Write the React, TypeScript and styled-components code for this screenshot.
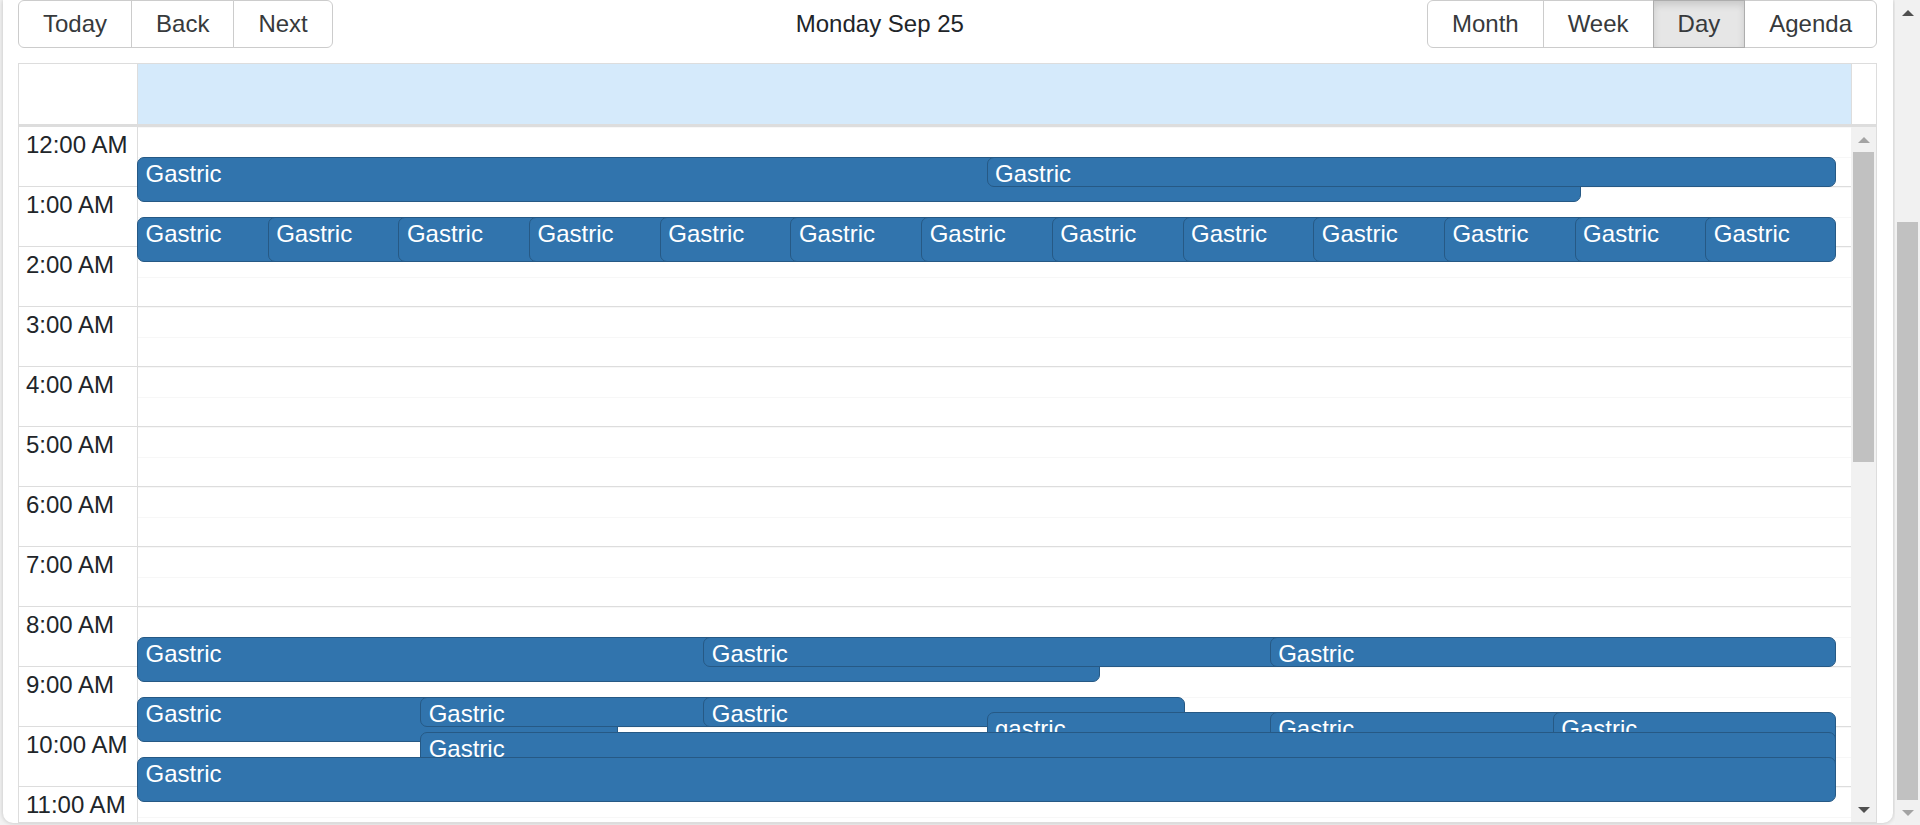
import React from "react";
import styled, { createGlobalStyle, css } from "styled-components";

const GlobalStyle = createGlobalStyle`
  *, *::before, *::after { box-sizing: border-box; }
  html, body { margin: 0; padding: 0; height: 100%; overflow: hidden; background: #f3f3f3; }
  body { font-family: "Liberation Sans", Arial, sans-serif; color: #212529; }
  #root { height: 100%; }
`;

const HOUR_PX = 60;
const DAY_PX = HOUR_PX * 24;
const VISIBLE_PX = 694;
const ARROW_PX = 25;

const Page = styled.div`
  display: flex;
  width: 1920px;
  height: 825px;
  overflow: hidden;
  background: #f3f3f3;
`;

const PanelArea = styled.div`
  flex: 1;
  min-width: 0;
  display: flex;
  padding: 0 2px 0 3px;
`;

const Panel = styled.div`
  flex: 1;
  min-width: 0;
  height: 823px;
  display: flex;
  flex-direction: column;
  background: #fff;
  border-radius: 0 0 10px 10px;
  box-shadow: 0 0 5px rgba(0, 0, 0, 0.22);
  padding: 0 16px 0 15px;
`;

const Toolbar = styled.div`
  display: flex;
  align-items: center;
  height: 48px;
  margin-bottom: 15px;
  font-size: 24px;
  flex: none;
`;

const BtnGroup = styled.div`
  display: inline-flex;
  flex: none;
`;

const ToolButton = styled.button<{ $active?: boolean }>`
  font: inherit;
  font-size: 24px;
  line-height: 28px;
  color: #373a3c;
  background: #fff;
  border: 1px solid #ccc;
  padding: 9px 24px;
  margin: 0;
  border-radius: 0;
  cursor: pointer;
  white-space: nowrap;
  & + & { margin-left: -1px; }
  &:first-child { border-radius: 6px 0 0 6px; }
  &:last-child { border-radius: 0 6px 6px 0; }
  ${(p) =>
    p.$active &&
    css`
      background: #e6e6e6;
      border-color: #adadad;
      box-shadow: inset 0 4px 7px rgba(0, 0, 0, 0.125);
      position: relative;
      z-index: 1;
    `}
`;

const Title = styled.span`
  flex: 1;
  text-align: center;
  padding: 0 15px;
  color: #212529;
`;

const TimeView = styled.div`
  flex: 1;
  min-height: 0;
  display: flex;
  flex-direction: column;
  border: 1px solid #ddd;
`;

const TimeHeader = styled.div`
  display: flex;
  height: 60px;
  flex: none;
  margin-right: 24px;
  border-right: 1px solid #ddd;
`;

const GutterHeader = styled.div`
  width: 118px;
  flex: none;
  background: #fff;
`;

const HeaderContent = styled.div`
  flex: 1;
  border-left: 1px solid #ddd;
  background: #d5eafb;
`;

const TimeContent = styled.div`
  flex: 1;
  min-height: 0;
  display: flex;
  align-items: flex-start;
  border-top: 3px solid #ddd;
  overflow: hidden;
`;

const Gutter = styled.div`
  width: 118px;
  flex: none;
  display: flex;
  flex-direction: column;
`;

const GutterGroup = styled.div`
  height: ${HOUR_PX}px;
  border-bottom: 1px solid #ddd;
  font-size: 24px;
  padding: 4px 7px 0;
  white-space: nowrap;
  color: #212529;
`;

const DayColumn = styled.div`
  flex: 1;
  min-width: 0;
  position: relative;
  border-left: 1px solid #ddd;
  display: flex;
  flex-direction: column;
`;

const SlotGroup = styled.div`
  height: ${HOUR_PX}px;
  border-bottom: 1px solid #ddd;
  display: flex;
  flex-direction: column;
`;

const Slot = styled.div`
  flex: 1;
  border-top: 1px solid #f7f7f7;
`;

const EventsLayer = styled.div`
  position: absolute;
  top: 0;
  left: -1px;
  right: 15px;
  height: ${DAY_PX}px;
`;

const EventBox = styled.div`
  position: absolute;
  background: #3174ad;
  border: 1px solid #265985;
  border-radius: 7px;
  color: #fff;
  padding: 2px 7.5px 3px;
  font-size: 24px;
  line-height: normal;
  overflow: hidden;
  white-space: nowrap;
`;

const Rail = styled.div`
  width: 25px;
  flex: none;
  align-self: stretch;
  display: flex;
  flex-direction: column;
  background: #f1f1f1;
`;

const ArrowButton = styled.div`
  height: ${ARROW_PX}px;
  flex: none;
  display: flex;
  align-items: center;
  justify-content: center;
`;

const Triangle = styled.span<{ $down?: boolean; $dim?: boolean }>`
  width: 0;
  height: 0;
  border-left: 6px solid transparent;
  border-right: 6px solid transparent;
  ${(p) =>
    p.$down
      ? css`border-top: 6px solid ${p.$dim ? "#a3a3a3" : "#505050"};`
      : css`border-bottom: 6px solid ${p.$dim ? "#a3a3a3" : "#505050"};`}
`;

const Track = styled.div`
  flex: 1;
  display: flex;
  flex-direction: column;
  padding: 0 2px;
`;

const Thumb = styled.div`
  background: #c1c1c1;
  flex: none;
`;

type Ev = { title: string; start: number; dur: number; left: number; width: number };

const makeEvents = (): Ev[] => {
  const list: Ev[] = [];
  const add = (start: number, dur: number, left: number, width: number, title = "Gastric") =>
    list.push({ title, start, dur, left, width });
  add(30, 45, 0, 85);
  add(30, 30, 50, 50);
  for (let i = 0; i < 13; i++) {
    const step = 100 / 13;
    add(90, 45, i * step, i < 12 ? step * 1.7 : step);
  }
  const t3 = 100 / 3;
  add(510, 45, 0, t3 * 1.7);
  add(510, 30, t3, t3 * 1.7);
  add(510, 30, t3 * 2, t3);
  const s6 = 100 / 6;
  add(570, 45, 0, s6 * 1.7);
  add(570, 30, s6, s6 * 1.7);
  add(570, 30, s6 * 2, s6 * 1.7);
  add(585, 45, s6 * 3, s6 * 1.7, "gastric");
  add(585, 45, s6 * 4, s6 * 1.7);
  add(585, 45, s6 * 5, s6);
  add(605, 45, s6, 100 - s6);
  add(630, 45, 0, 100);
  return list;
};

const events = makeEvents();

const hourLabel = (h: number) => {
  const suffix = h < 12 ? "AM" : "PM";
  const hh = h % 12 === 0 ? 12 : h % 12;
  return `${hh}:00 ${suffix}`;
};

const hours = Array.from({ length: 24 }, (_, i) => i);

function ScrollRail({
  viewport,
  content,
  scrollTop,
  trackPx,
  upDim,
  downDim,
}: {
  viewport: number;
  content: number;
  scrollTop: number;
  trackPx: number;
  upDim: boolean;
  downDim: boolean;
}) {
  const thumbH = Math.round((viewport / content) * trackPx);
  const thumbTop = Math.round((scrollTop / content) * trackPx);
  return (
    <Rail>
      <ArrowButton>
        <Triangle $dim={upDim} />
      </ArrowButton>
      <Track>
        <Thumb style={{ marginTop: thumbTop, height: thumbH }} />
      </Track>
      <ArrowButton>
        <Triangle $down $dim={downDim} />
      </ArrowButton>
    </Rail>
  );
}

export default function App() {
  const views = ["Month", "Week", "Day", "Agenda"];
  const pageContent = 1106;
  const pageTrack = 825 - ARROW_PX * 2;
  return (
    <>
      <GlobalStyle />
      <Page>
        <PanelArea>
          <Panel>
            <Toolbar>
              <BtnGroup>
                <ToolButton>Today</ToolButton>
                <ToolButton>Back</ToolButton>
                <ToolButton>Next</ToolButton>
              </BtnGroup>
              <Title>Monday Sep 25</Title>
              <BtnGroup>
                {views.map((v) => (
                  <ToolButton key={v} $active={v === "Day"}>
                    {v}
                  </ToolButton>
                ))}
              </BtnGroup>
            </Toolbar>
            <TimeView>
              <TimeHeader>
                <GutterHeader />
                <HeaderContent />
              </TimeHeader>
              <TimeContent>
                <Gutter>
                  {hours.map((h) => (
                    <GutterGroup key={h}>{hourLabel(h)}</GutterGroup>
                  ))}
                </Gutter>
                <DayColumn>
                  {hours.map((h) => (
                    <SlotGroup key={h}>
                      <Slot />
                      <Slot />
                    </SlotGroup>
                  ))}
                  <EventsLayer>
                    {events.map((e, i) => (
                      <EventBox
                        key={i}
                        style={{
                          top: (e.start / 60) * HOUR_PX,
                          height: (e.dur / 60) * HOUR_PX,
                          left: `${e.left}%`,
                          width: `${e.width}%`,
                        }}
                      >
                        {e.title}
                      </EventBox>
                    ))}
                  </EventsLayer>
                </DayColumn>
                <ScrollRail
                  viewport={VISIBLE_PX}
                  content={DAY_PX}
                  scrollTop={0}
                  trackPx={VISIBLE_PX - ARROW_PX * 2}
                  upDim
                  downDim={false}
                />
              </TimeContent>
            </TimeView>
          </Panel>
        </PanelArea>
        <ScrollRail
          viewport={825}
          content={pageContent}
          scrollTop={pageContent - 825}
          trackPx={pageTrack}
          upDim={false}
          downDim
        />
      </Page>
    </>
  );
}
